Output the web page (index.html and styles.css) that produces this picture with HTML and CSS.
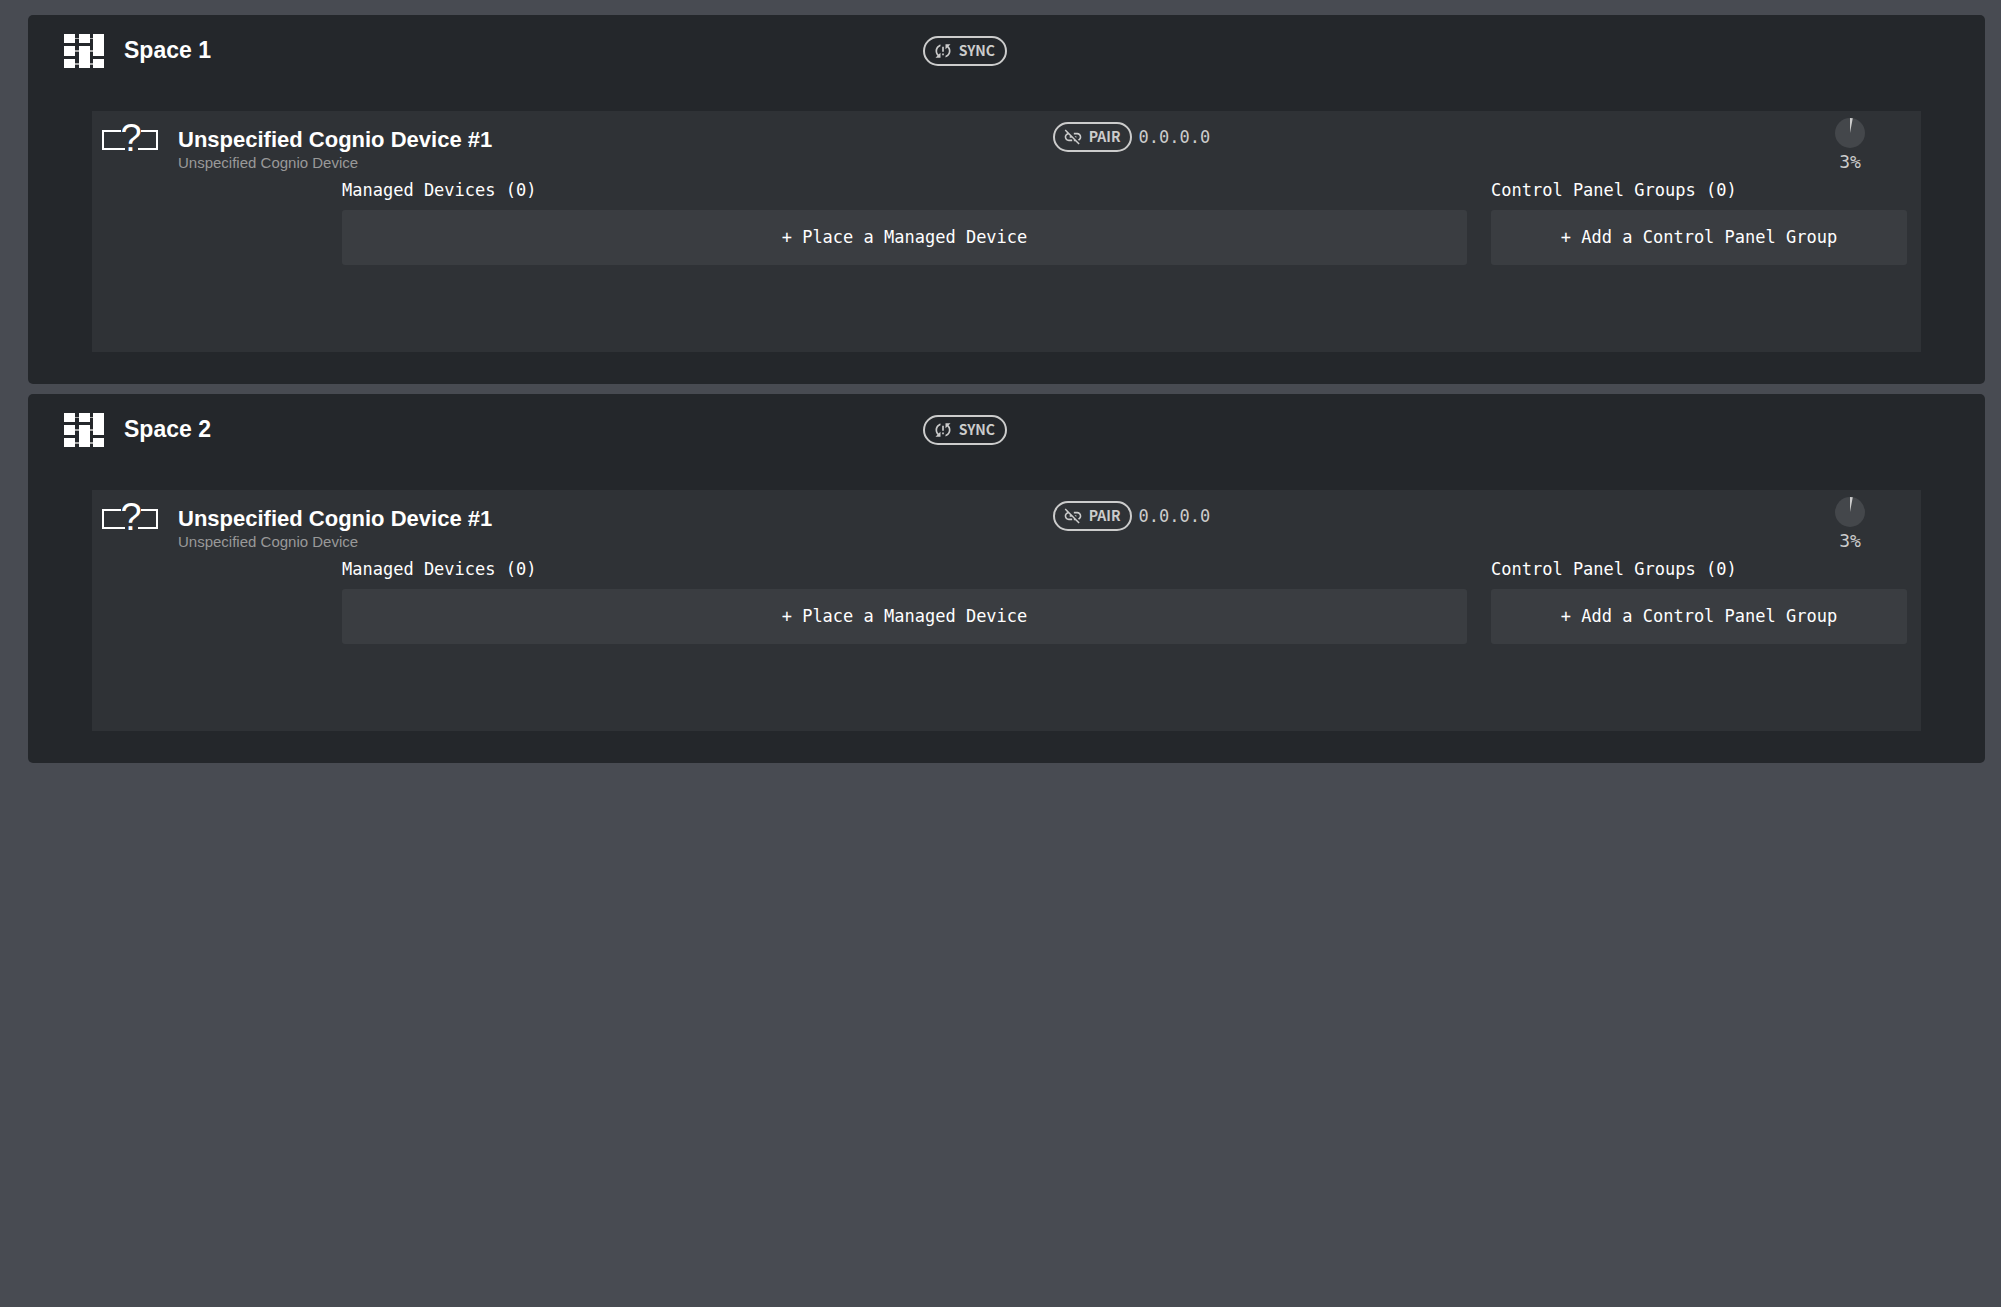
FILE: index.html
```
<!DOCTYPE html>
<html lang="en">
<head>
    <meta charset="UTF-8">
    <meta name="viewport" content="width=device-width, initial-scale=1.0">
    <title>Spaces</title>
    <link rel="stylesheet" href="styles.css">
</head>
<body>
    <svg class="symbols" aria-hidden="true">
        <symbol id="icon-space" viewBox="0 0 40 36">
            <path fill="#aaa" d="M11 5h18v1H11zM11 17h18v2H11zM11 30h18v2H11z"/>
            <path fill="#fff" d="M0 1h11v9H0zM0 13h11v10H0zM0 26h11v9H0zM15 1h11v9H15zM15 13h11v22H15zM29 1h11v22H29zM29 26h11v9H29z"/>
        </symbol>
        <symbol id="icon-sync" viewBox="0 0 24 24">
            <path fill="currentColor" d="M3 12c0 2.21.91 4.2 2.36 5.64L3 20h6v-6l-2.24 2.24C5.68 15.15 5 13.66 5 12c0-2.61 1.67-4.83 4-5.65V4.26C5.55 5.15 3 8.27 3 12zm8 5h2v-2h-2v2zM21 4h-6v6l2.24-2.24C18.32 8.85 19 10.34 19 12c0 2.61-1.67 4.83-4 5.65v2.09c3.45-.89 6-4.01 6-7.74 0-2.21-.91-4.2-2.36-5.64L21 4zm-10 9h2V7h-2v6z"/>
        </symbol>
        <symbol id="icon-unlink" viewBox="0 0 24 24">
            <path fill="currentColor" d="M17 7h-4v1.9h4c1.71 0 3.1 1.39 3.1 3.1 0 1.43-.98 2.63-2.31 2.98l1.46 1.46C20.88 15.61 22 13.95 22 12c0-2.76-2.24-5-5-5zm-1 4h-2.19l2 2H16zM2 4.27l3.11 3.11C3.29 8.12 2 9.91 2 12c0 2.76 2.24 5 5 5h4v-1.9H7c-1.71 0-3.1-1.39-3.1-3.1 0-1.59 1.21-2.9 2.76-3.07L8.73 11H8v2h2.73L13 15.27V17h1.73l4.01 4L20 19.74 3.27 3z"/>
        </symbol>
        <symbol id="icon-pie" viewBox="0 0 30 30">
            <circle cx="15" cy="15" r="15" fill="#44474b"/>
            <path fill="#ccc" d="M15 15V0A15 15 0 0 1 17.8 .26z"/>
        </symbol>
    </svg>

    <main class="spaces">
        <section class="space">
            <header class="space-header">
                <svg class="space-icon"><use href="#icon-space"/></svg>
                <h2>Space 1</h2>
                <button class="pill sync" type="button"><svg><use href="#icon-sync"/></svg>SYNC</button>
            </header>
            <article class="device">
                <header class="device-header">
                    <svg class="device-icon" viewBox="0 0 56 48">
                        <path d="M19 16H1v18h22M39 16h16v18H36"/>
                        <text x="29" y="36">?</text>
                    </svg>
                    <div class="device-name">
                        <h3>Unspecified Cognio Device #1</h3>
                        <p>Unspecified Cognio Device</p>
                    </div>
                    <div class="connection">
                        <button class="pill" type="button"><svg><use href="#icon-unlink"/></svg>PAIR</button>
                        <span>0.0.0.0</span>
                    </div>
                    <div class="usage">
                        <svg><use href="#icon-pie"/></svg>
                        <span>3%</span>
                    </div>
                </header>
                <div class="device-content">
                    <div class="group">
                        <h4>Managed Devices (0)</h4>
                        <button class="add" type="button">+ Place a Managed Device</button>
                    </div>
                    <div class="group">
                        <h4>Control Panel Groups (0)</h4>
                        <button class="add" type="button">+ Add a Control Panel Group</button>
                    </div>
                </div>
            </article>
        </section>

        <section class="space">
            <header class="space-header">
                <svg class="space-icon"><use href="#icon-space"/></svg>
                <h2>Space 2</h2>
                <button class="pill sync" type="button"><svg><use href="#icon-sync"/></svg>SYNC</button>
            </header>
            <article class="device">
                <header class="device-header">
                    <svg class="device-icon" viewBox="0 0 56 48">
                        <path d="M19 16H1v18h22M39 16h16v18H36"/>
                        <text x="29" y="36">?</text>
                    </svg>
                    <div class="device-name">
                        <h3>Unspecified Cognio Device #1</h3>
                        <p>Unspecified Cognio Device</p>
                    </div>
                    <div class="connection">
                        <button class="pill" type="button"><svg><use href="#icon-unlink"/></svg>PAIR</button>
                        <span>0.0.0.0</span>
                    </div>
                    <div class="usage">
                        <svg><use href="#icon-pie"/></svg>
                        <span>3%</span>
                    </div>
                </header>
                <div class="device-content">
                    <div class="group">
                        <h4>Managed Devices (0)</h4>
                        <button class="add" type="button">+ Place a Managed Device</button>
                    </div>
                    <div class="group">
                        <h4>Control Panel Groups (0)</h4>
                        <button class="add" type="button">+ Add a Control Panel Group</button>
                    </div>
                </div>
            </article>
        </section>
    </main>
</body>
</html>
```
FILE: styles.css
```
* {
    box-sizing: border-box;
}

body {
    margin: 0;
    background-color: #484b52;
    color: #fff;
    font-family: "Liberation Sans", Arial, sans-serif;
}

h2, h3, h4, p {
    margin: 0;
}

.symbols {
    display: none;
}

.spaces {
    display: flex;
    flex-direction: column;
    gap: 10px;
    padding: 15px 16px 15px 28px;
}

.space {
    padding: 18px 64px 32px;
    border-radius: 5px;
    background-color: #24272b;
}

.space-header {
    display: grid;
    grid-template-columns: 60px 4fr 5fr;
    align-items: start;
    height: 78px;
    margin-left: -28px;
}

.space-icon {
    width: 40px;
    height: 36px;
}

.space-header h2 {
    font-size: 23px;
    line-height: 34px;
}

.pill {
    display: flex;
    align-items: center;
    gap: 6px;
    height: 30px;
    padding: 0 10px 2px 8px;
    border: 2px solid #ccc;
    border-radius: 15px;
    background: transparent;
    color: #ccc;
    font: bold 14px/24px "Noto Sans CJK JP", sans-serif;
    cursor: pointer;
}

.pill svg {
    width: 20px;
    height: 20px;
    margin-top: 2px;
}

.pill.sync {
    justify-self: start;
    margin-top: 3px;
}

.device {
    min-height: 241px;
    padding-right: 14px;
    background-color: #2f3236;
}

.device-header {
    display: grid;
    grid-template-columns: 76px 13fr 11fr 114px;
    height: 66px;
    padding-left: 10px;
}

.device-icon {
    width: 56px;
    height: 48px;
    margin-top: 4px;
}

.device-icon path {
    fill: none;
    stroke: #fff;
    stroke-width: 2px;
}

.device-icon text {
    fill: #fff;
    font-size: 38px;
    text-anchor: middle;
}

.device-name {
    padding-top: 16px;
}

.device-name h3 {
    font-size: 22px;
    line-height: 26px;
}

.device-name p {
    color: #999;
    font-size: 15px;
    line-height: 20px;
}

.connection {
    display: flex;
    align-items: center;
    gap: 6px;
    height: 30px;
    margin-top: 11px;
    color: #ccc;
    font: 17px/30px "DejaVu Sans Mono", monospace;
}

.usage {
    display: flex;
    flex-direction: column;
    align-items: center;
    padding-top: 7px;
    color: #ccc;
    font: 18px/28px "DejaVu Sans Mono", monospace;
}

.usage svg {
    width: 30px;
    height: 30px;
}

.device-content {
    display: grid;
    grid-template-columns: 1fr 416px;
    gap: 24px;
    padding-left: 250px;
}

.group h4 {
    font: 17px/26px "DejaVu Sans Mono", monospace;
}

.add {
    width: 100%;
    height: 55px;
    margin-top: 7px;
    padding-bottom: 2px;
    border: none;
    border-radius: 3px;
    background-color: #3a3d41;
    color: #fff;
    font: 17px/24px "DejaVu Sans Mono", monospace;
    cursor: pointer;
}
```
